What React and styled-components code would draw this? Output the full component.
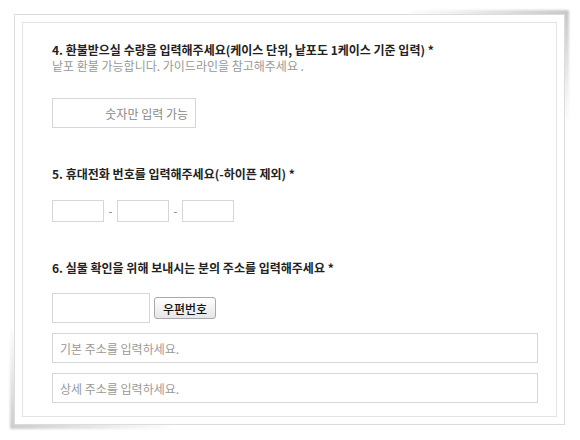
import React from 'react'
import styled, { createGlobalStyle } from 'styled-components'

const GlobalStyle = createGlobalStyle`
    html, body {
        margin: 0;
        padding: 0;
        background: #fff;
    }
    body {
        font-family: "Noto Sans CJK KR", "Noto Sans", sans-serif;
        font-size: 12px;
        color: #333;
    }
`;

const Page = styled.div`
    padding: 14px 15px 14px 14px;
`;

const Frame = styled.div`
    position: relative;
    isolation: isolate;
    width: 551px;

    &::before,
    &::after {
        content: '';
        position: absolute;
        z-index: 0;
        width: 160px;
        filter: blur(1px);
    }

    &::before {
        top: -4px;
        right: -4px;
        height: 110px;
        background: radial-gradient(ellipse at top right, rgba(0, 0, 0, 0.22), rgba(0, 0, 0, 0.06) 50%, transparent 75%);
    }

    &::after {
        bottom: -4px;
        left: -4px;
        height: 100px;
        background: radial-gradient(ellipse at bottom left, rgba(0, 0, 0, 0.2), rgba(0, 0, 0, 0.06) 50%, transparent 75%);
    }
`;

const Paper = styled.div`
    position: relative;
    z-index: 1;
    width: 535px;
    height: 395px;
    padding: 7px;
    background: #fff;
    border: 1px solid #dcdcdc;
`;

const Card = styled.div`
    height: 100%;
    box-sizing: border-box;
    border: 1px solid #e3e3e3;
    padding: 19px 18px 0 29px;
    background: #fff;
`;

const Section = styled.div`
    margin-top: ${p => p.$top || 0}px;
`;

const Question = styled.div`
    font-size: 12px;
    line-height: 15px;
    font-weight: 700;
    color: #222;
`;

const Hint = styled.div`
    margin-top: 1px;
    font-size: 12px;
    line-height: 15px;
    color: #999;
`;

const Field = styled.input`
    box-sizing: border-box;
    width: ${p => p.$w}px;
    height: ${p => p.$h || 30}px;
    margin: 0;
    padding: 0 7px;
    border: 1px solid #d6d6d6;
    background: #fff;
    font-family: "Noto Sans CJK KR", sans-serif;
    font-size: 12px;
    color: #333;
    text-align: ${p => p.$align || 'left'};
    outline: none;

    &::placeholder {
        color: ${p => p.$hintColor || '#999'};
    }
`;

const Row = styled.div`
    display: flex;
    align-items: center;
    margin-top: ${p => p.$top || 0}px;
`;

const Dash = styled.span`
    width: 13px;
    text-align: center;
    font-size: 11px;
    color: #777;
`;

const ZipButton = styled.button`
    box-sizing: border-box;
    height: 22px;
    margin-left: 4px;
    padding: 0 8px;
    border: 1px solid #a9a9a9;
    border-radius: 3px;
    background: linear-gradient(#ffffff, #e6e6e6);
    font-family: "Noto Sans CJK KR", sans-serif;
    font-size: 12px;
    font-weight: 500;
    color: #111;
    cursor: pointer;
`;

const Stack = styled.div`
    display: flex;
    flex-direction: column;
    gap: 10px;
    margin-top: 10px;
`;

const App = () => {
    return (
        <Page>
            <GlobalStyle />
            <Frame>
                <Paper>
                    <Card>
                        <Section>
                            <Question>4. 환불받으실 수량을 입력해주세요(케이스 단위, 낱포도 1케이스 기준 입력) *</Question>
                            <Hint>낱포 환불 가능합니다. 가이드라인을 참고해주세요 .</Hint>
                            <Row $top={25}>
                                <Field $w={144} $align="right" $hintColor="#888" placeholder="숫자만 입력 가능" />
                            </Row>
                        </Section>
                        <Section $top={38}>
                            <Question>5. 휴대전화 번호를 입력해주세요(-하이픈 제외) *</Question>
                            <Row $top={19}>
                                <Field $w={52} $h={22} />
                                <Dash>-</Dash>
                                <Field $w={52} $h={22} />
                                <Dash>-</Dash>
                                <Field $w={52} $h={22} />
                            </Row>
                        </Section>
                        <Section $top={38}>
                            <Question>6. 실물 확인을 위해 보내시는 분의 주소를 입력해주세요 *</Question>
                            <Row $top={18}>
                                <Field $w={98} />
                                <ZipButton>우편번호</ZipButton>
                            </Row>
                            <Stack>
                                <Field $w={486} placeholder="기본 주소를 입력하세요." />
                                <Field $w={486} placeholder="상세 주소를 입력하세요." />
                            </Stack>
                        </Section>
                    </Card>
                </Paper>
            </Frame>
        </Page>
    )
}

export default App
